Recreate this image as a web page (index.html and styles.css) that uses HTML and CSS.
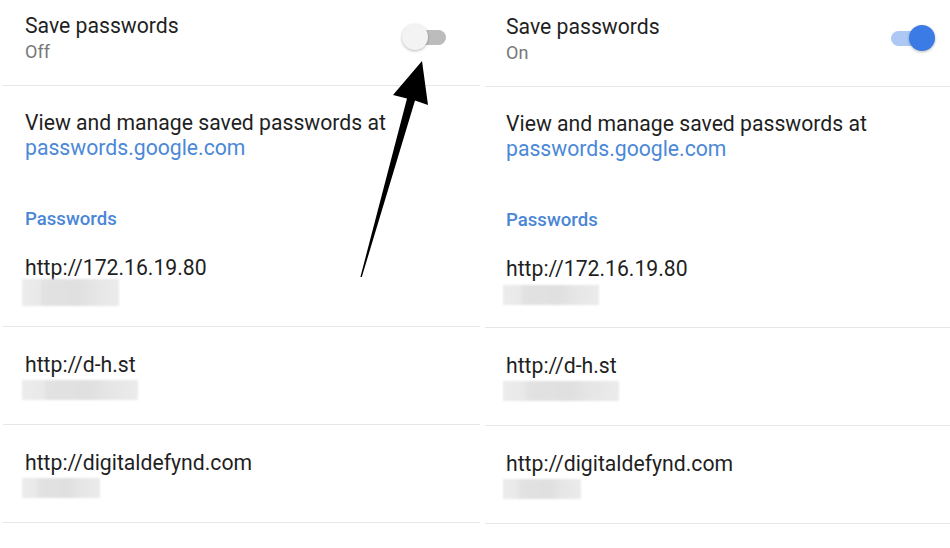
FILE: index.html
```html
<!DOCTYPE html>
<html>
<head>
<meta charset="utf-8">
<link rel="stylesheet" href="styles.css">
</head>
<body>
<div class="page">
  <section class="panel panel-left">
    <div class="row toggle-row">
      <div class="text">
        <div class="title">Save passwords</div>
        <div class="sub">Off</div>
      </div>
      <div class="toggle off"><span class="track"></span><span class="knob"></span></div>
    </div>
    <div class="manage">
      <div class="title">View and manage saved passwords at</div>
      <div class="link">passwords.google.com</div>
    </div>
    <div class="header">Passwords</div>
    <div class="item first">
      <div class="title">http://172.16.19.80</div>
      <div class="blur tall w97"></div>
    </div>
    <div class="item">
      <div class="title">http://d-h.st</div>
      <div class="blur w116"></div>
    </div>
    <div class="item">
      <div class="title">http://digitaldefynd.com</div>
      <div class="blur w78"></div>
    </div>
  </section>
  <section class="panel panel-right">
    <div class="row toggle-row">
      <div class="text">
        <div class="title">Save passwords</div>
        <div class="sub">On</div>
      </div>
      <div class="toggle on"><span class="track"></span><span class="knob"></span></div>
    </div>
    <div class="manage">
      <div class="title">View and manage saved passwords at</div>
      <div class="link">passwords.google.com</div>
    </div>
    <div class="header">Passwords</div>
    <div class="item first">
      <div class="title">http://172.16.19.80</div>
      <div class="blur w96"></div>
    </div>
    <div class="item">
      <div class="title">http://d-h.st</div>
      <div class="blur w116"></div>
    </div>
    <div class="item">
      <div class="title">http://digitaldefynd.com</div>
      <div class="blur w78"></div>
    </div>
  </section>
</div>
<svg class="arrow" width="950" height="548" viewBox="0 0 950 548" xmlns="http://www.w3.org/2000/svg">
  <polygon points="422,61 428,105 415,100.5 361.8,277 360.4,277 407,98.4 393,95" fill="#000"/>
</svg>
</body>
</html>
```
FILE: styles.css
```css
html, body {
  margin: 0;
  padding: 0;
  background: #ffffff;
}
body {
  font-family: Roboto, "Noto Sans", "Liberation Sans", sans-serif;
  color: #212121;
  width: 950px;
  height: 548px;
  overflow: hidden;
  position: relative;
}
.page {
  display: flex;
  align-items: flex-start;
}
.panel {
  box-sizing: border-box;
}
.panel-left {
  width: 477px;
  margin-left: 3px;
  padding-left: 22px;
}
.panel-right {
  width: 465px;
  margin-left: 5px;
  padding-left: 21px;
  padding-top: 1px;
}
.panel > div {
  margin-left: -22px;
  padding-left: 22px;
}
.panel-right > div {
  margin-left: -21px;
  padding-left: 21px;
}
.title {
  font-size: 21.2px;
  line-height: 24px;
  color: #1f1f1f;
  white-space: nowrap;
}
.toggle-row {
  display: flex;
  justify-content: space-between;
  align-items: flex-start;
  height: 86px;
  box-sizing: border-box;
  padding-top: 14px;
  border-bottom: 1px solid #e6e6e6;
}
.panel-left .toggle-row { padding-right: 34px; }
.panel-right .toggle-row { padding-right: 15px; }
.sub {
  font-size: 18px;
  line-height: 24px;
  color: #777777;
  margin-top: 2px;
}
.toggle {
  position: relative;
  width: 44px;
  height: 26px;
  margin-top: 10px;
}
.track {
  position: absolute;
  left: 4px;
  right: 0;
  top: 6px;
  height: 15px;
  border-radius: 8px;
}
.knob {
  position: absolute;
  top: 0;
  width: 26px;
  height: 26px;
  border-radius: 50%;
}
.toggle.off .track { background: #bcbcbc; }
.toggle.off .knob {
  left: 0;
  background: #f3f3f3;
  box-shadow: 0 1px 3px rgba(0,0,0,0.28);
}
.toggle.on .track { background: #adc8f3; left: 0; }
.toggle.on .knob {
  right: 0;
  background: #3b7be6;
  box-shadow: 0 1px 3px rgba(0,0,0,0.28);
}
.manage {
  padding-top: 25px;
}
.link {
  font-size: 21.2px;
  line-height: 24px;
  margin-top: 1px;
  color: #4b88d8;
}
.header {
  padding-top: 47px;
  font-size: 18.6px;
  line-height: 24px;
  font-weight: 500;
  color: #4a86d6;
}
.item {
  box-sizing: border-box;
  height: 98px;
  padding-top: 26px;
  border-bottom: 1px solid #e6e6e6;
}
.item.first {
  height: 96px;
  padding-top: 25px;
}
.blur {
  height: 20px;
  margin-top: 3px;
  margin-left: -3px;
  background: linear-gradient(90deg, #ececec 0%, #e9e9e9 18%, #e2e2e2 22%, #e0e0e0 60%, #e6e6e6 75%, #ebebeb 100%);
  filter: blur(1px);
}
.blur.tall {
  height: 27px;
  margin-top: -1px;
}
.panel-right .item.first .blur {
  margin-top: 4px;
}
.w97 { width: 97px; }
.w96 { width: 96px; }
.w116 { width: 116px; }
.w78 { width: 78px; }
.arrow {
  position: absolute;
  left: 0;
  top: 0;
  pointer-events: none;
}
```
